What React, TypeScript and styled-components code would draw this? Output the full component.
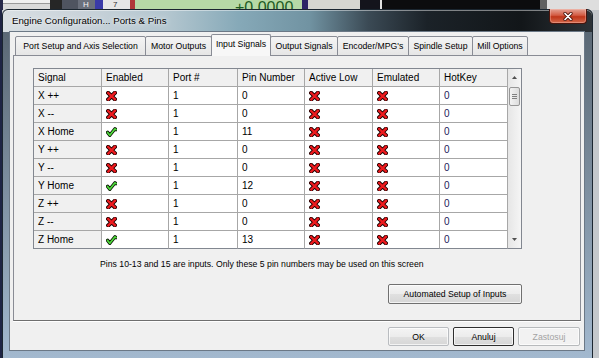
import React from 'react';
import styled, { createGlobalStyle } from 'styled-components';

const GlobalStyle = createGlobalStyle`
  html, body {
    margin: 0;
    padding: 0;
    overflow: hidden;
    background: #1e2444;
  }
  * {
    box-sizing: border-box;
  }
`;

const Desktop = styled.div`
  width: 599px;
  height: 358px;
  overflow: hidden;
  background: linear-gradient(to right, #1e2444 0, #1e2444 2px, #c4c8cc 2px);
  font-family: 'Liberation Sans', Arial, sans-serif;
  color: #000;
`;

const BackStrip = styled.div`
  display: flex;
  height: 10px;
  overflow: hidden;
`;

const StripBlock = styled.div<{ $w: number; $bg: string; $fg?: string; $pad?: number; $size?: number }>`
  flex: none;
  width: ${(p) => p.$w}px;
  height: 10px;
  overflow: hidden;
  background: ${(p) => p.$bg};
  color: ${(p) => p.$fg || '#000'};
  padding-left: ${(p) => p.$pad || 0}px;
  font-size: ${(p) => p.$size || 8}px;
  line-height: ${(p) => (p.$size && p.$size > 10 ? 16 : 10)}px;
  white-space: nowrap;
`;

const Window = styled.div`
  position: relative;
  z-index: 1;
  width: 591px;
  margin: -1px 0 0 2px;
  border: 1px solid #1b2630;
  border-radius: 6px 6px 0 0;
  padding: 0 7px 8px 6px;
  background:
    linear-gradient(
        to right,
        #d9dfe3 0%,
        #c8d2d9 14%,
        #b3c6cf 28%,
        #86a9b8 40%,
        #7193a2 52%,
        #3b4a55 62%,
        #1b2228 72%,
        #121619 88%,
        #2c3237 100%
      )
      top left / 100% 22px no-repeat,
    linear-gradient(to bottom, #56636f, #a3b9cf);
  box-shadow: inset 0 1px 0 rgba(255, 255, 255, 0.45);
`;

const TitleBar = styled.div`
  display: flex;
  align-items: flex-start;
  height: 21px;
`;

const Title = styled.span`
  margin-left: 3px;
  font-size: 9.7px;
  line-height: 21px;
  color: #000;
  text-shadow: 0 0 6px rgba(255, 255, 255, 0.9), 0 0 2px rgba(255, 255, 255, 0.8);
`;

const CloseButton = styled.div`
  margin: -1px -2px 0 auto;
  width: 38px;
  height: 15px;
  display: flex;
  align-items: center;
  justify-content: center;
  border: 1px solid #4a140c;
  border-top: none;
  border-radius: 0 0 4px 4px;
  background: linear-gradient(#e3a395 0%, #d35b43 45%, #bf3519 55%, #d4694c 100%);
  box-shadow: inset 0 0 0 1px rgba(255, 210, 200, 0.35);
`;

const Client = styled.div`
  height: 320px;
  border: 1px solid #6b7886;
  background: #f0f0f0;
  display: flex;
  flex-direction: column;
`;

const TabStrip = styled.div`
  position: relative;
  z-index: 1;
  display: flex;
  align-items: flex-end;
  height: 21px;
  margin: 3px 0 -1px;
  padding-left: 5px;
`;

const Tab = styled.div<{ $active?: boolean; $w: number }>`
  position: relative;
  flex: none;
  width: ${(p) => p.$w}px;
  height: ${(p) => (p.$active ? 22 : 20)}px;
  margin-right: -1px;
  z-index: ${(p) => (p.$active ? 2 : 1)};
  border: 1px solid #898c95;
  border-bottom: ${(p) => (p.$active ? 'none' : '1px solid #898c95')};
  border-radius: 2px 2px 0 0;
  background: ${(p) => (p.$active ? '#f7f7f7' : 'linear-gradient(#f4f4f4, #e6e6e6)')};
  font-size: 8.7px;
  line-height: ${(p) => (p.$active ? 18 : 19)}px;
  text-align: center;
  white-space: nowrap;
`;

const Panel = styled.div`
  height: 266px;
  margin: 0 3px;
  padding: 12px 0 0 19px;
  border: 1px solid #898c95;
  border-bottom-color: #6f6f6f;
  background: #f0f0f0;
  box-shadow: 0 1px 0 #ffffff;
`;

const Grid = styled.div`
  display: flex;
  width: 489px;
  height: 181px;
  border: 1px solid #828790;
  border-bottom: none;
  background: #fff;
`;

const Table = styled.div`
  display: grid;
  grid-template-columns: 68px 67px 69px 67px 68px 67px 68px;
  grid-auto-rows: 18px;
  width: 474px;

  & > :nth-last-child(-n + 7) {
    border-bottom: 1px solid #828790;
  }
`;

const Cell = styled.div<{ $kind: 'head' | 'side' | 'data'; $num?: boolean }>`
  display: flex;
  align-items: center;
  padding-left: 4px;
  border-right: 1px solid #a7a7a7;
  border-bottom: 1px solid #a7a7a7;
  background: ${(p) => (p.$kind === 'data' ? '#ffffff' : '#f0f0f0')};
  color: ${(p) => (p.$num ? '#22205a' : '#000')};
  font-size: 10px;
  white-space: nowrap;
`;

const ScrollBar = styled.div`
  width: 13px;
  display: flex;
  flex-direction: column;
  border-bottom: 1px solid #828790;
  background: linear-gradient(to right, #e6e6e6, #f5f5f5);
`;

const ArrowBox = styled.div`
  height: 17px;
  display: flex;
  align-items: center;
  justify-content: center;
`;

const Track = styled.div`
  flex: 1;
  padding: 1px 1px 0;
`;

const Thumb = styled.div`
  height: 19px;
  display: flex;
  align-items: center;
  justify-content: center;
  border: 1px solid #979797;
  border-radius: 2px;
  background: linear-gradient(to right, #f3f3f3, #dcdcdc);
`;

const Grip = styled.div`
  width: 5px;
  height: 5px;
  background: linear-gradient(#808080 1px, transparent 1px) 0 0 / 5px 2px;
`;

const Note = styled.div`
  margin: 10px 0 0 67px;
  font-size: 8.7px;
  line-height: 11px;
  white-space: nowrap;
`;

const ButtonRow = styled.div`
  display: flex;
  justify-content: flex-end;
  width: 489px;
  margin-top: 14px;
`;

const Footer = styled.div`
  display: flex;
  justify-content: flex-end;
  gap: 4px;
  margin-top: 6px;
  padding-right: 4px;
`;

const Button = styled.div<{ $w: number; $h: number; $variant?: 'default' | 'focus' | 'disabled' }>`
  width: ${(p) => p.$w}px;
  height: ${(p) => p.$h}px;
  display: flex;
  align-items: center;
  justify-content: center;
  border: 1px solid
    ${(p) =>
      p.$variant === 'focus'
        ? '#2e2e2e'
        : p.$variant === 'default'
        ? '#b9bcc0'
        : p.$variant === 'disabled'
        ? '#b7babc'
        : '#707070'};
  border-radius: 2px;
  background: ${(p) =>
    p.$variant === 'disabled'
      ? '#f2f2f2'
      : 'linear-gradient(#f4f4f4 0%, #ececec 50%, #e0e0e0 51%, #d6d6d6 100%)'};
  box-shadow: inset 0 0 0 1px rgba(255, 255, 255, 0.7);
  color: ${(p) => (p.$variant === 'disabled' ? '#a3a3a3' : '#000')};
  font-size: 8.7px;
`;

const CrossIcon = () => (
  <svg width="11" height="10" viewBox="0 0 11 10">
    <path d="M2.2 2 L8.8 8.2 M8.9 1.8 L2.3 8.4" stroke="#1a0000" strokeWidth="4.2" strokeLinecap="square" />
    <path d="M2.2 2 L8.8 8.2 M8.9 1.8 L2.3 8.4" stroke="#ec1a1e" strokeWidth="2.4" strokeLinecap="square" />
  </svg>
);

const CheckIcon = () => (
  <svg width="11" height="10" viewBox="0 0 11 10">
    <path
      d="M1.6 5.4 L3.8 8.3 L9 1.8 L10 2.6"
      fill="none"
      stroke="#0c1a06"
      strokeWidth="3.4"
      strokeLinecap="round"
      strokeLinejoin="round"
    />
    <path
      d="M1.6 5.4 L3.8 8.3 L9 1.8 L10 2.6"
      fill="none"
      stroke="#4fdc3c"
      strokeWidth="1.7"
      strokeLinecap="round"
      strokeLinejoin="round"
    />
  </svg>
);

const CloseGlyph = () => (
  <svg width="12" height="9" viewBox="0 0 12 9">
    <path d="M3 1.5 L9 7.5 M9 1.5 L3 7.5" stroke="#4a1208" strokeWidth="3.2" strokeLinecap="round" />
    <path d="M3 1.5 L9 7.5 M9 1.5 L3 7.5" stroke="#ffffff" strokeWidth="1.7" strokeLinecap="round" />
  </svg>
);

const Arrow = ({ up }: { up?: boolean }) => (
  <svg width="5" height="3" viewBox="0 0 5 3">
    <path d={up ? 'M0 3 L2.5 0 L5 3 Z' : 'M0 0 L2.5 3 L5 0 Z'} fill="#505050" />
  </svg>
);

const strip = [
  { w: 3, bg: '#27294a' },
  { w: 47, bg: 'linear-gradient(#f0f0f0 0 3px, #9a9a9a 3px 4px, #dadada 4px)' },
  { w: 12, bg: '#262626' },
  { w: 16, bg: '#4f5460' },
  { w: 17, bg: '#6b707c', fg: '#f4f4f4', pad: 5, text: 'H' },
  { w: 8, bg: '#3a3aa8' },
  { w: 27, bg: '#e6e6e6', fg: '#303030', pad: 10, text: '7' },
  { w: 5, bg: '#b03838' },
  { w: 167, bg: '#b6d9a6', fg: '#1d5c23', pad: 100, size: 16, text: '+0.0000' },
  { w: 6, bg: '#2c2466' },
  { w: 52, bg: '#d6d6d0' },
  { w: 20, bg: '#14141c' },
  { w: 2, bg: '#e0e0e0' },
  { w: 158, bg: '#0c0c0e' },
  { w: 7, bg: '#606060' },
  { w: 52, bg: '#dedede' },
];

const tabs = [
  { label: 'Port Setup and Axis Selection', w: 131 },
  { label: 'Motor Outputs', w: 67 },
  { label: 'Input Signals', w: 60, active: true },
  { label: 'Output Signals', w: 68 },
  { label: "Encoder/MPG's", w: 72 },
  { label: 'Spindle Setup', w: 65 },
  { label: 'Mill Options', w: 56 },
];

const columns = ['Signal', 'Enabled', 'Port #', 'Pin Number', 'Active Low', 'Emulated', 'HotKey'];

const signals = [
  { name: 'X ++', on: false, pin: '0' },
  { name: 'X --', on: false, pin: '0' },
  { name: 'X Home', on: true, pin: '11' },
  { name: 'Y ++', on: false, pin: '0' },
  { name: 'Y --', on: false, pin: '0' },
  { name: 'Y Home', on: true, pin: '12' },
  { name: 'Z ++', on: false, pin: '0' },
  { name: 'Z --', on: false, pin: '0' },
  { name: 'Z Home', on: true, pin: '13' },
];

export default function App() {
  return (
    <Desktop>
      <GlobalStyle />
      <BackStrip>
        {strip.map((b, i) => (
          <StripBlock key={i} $w={b.w} $bg={b.bg} $fg={b.fg} $pad={b.pad} $size={b.size}>
            {b.text}
          </StripBlock>
        ))}
      </BackStrip>
      <Window>
        <TitleBar>
          <Title>Engine Configuration... Ports &amp; Pins</Title>
          <CloseButton>
            <CloseGlyph />
          </CloseButton>
        </TitleBar>
        <Client>
          <TabStrip>
            {tabs.map((t) => (
              <Tab key={t.label} $w={t.w} $active={t.active}>
                {t.label}
              </Tab>
            ))}
          </TabStrip>
          <Panel>
            <Grid>
              <Table>
                {columns.map((c) => (
                  <Cell key={c} $kind="head">
                    {c}
                  </Cell>
                ))}
                {signals.map((s) => (
                  <React.Fragment key={s.name}>
                    <Cell $kind="side">{s.name}</Cell>
                    <Cell $kind="data">{s.on ? <CheckIcon /> : <CrossIcon />}</Cell>
                    <Cell $kind="data">1</Cell>
                    <Cell $kind="data">{s.pin}</Cell>
                    <Cell $kind="data">
                      <CrossIcon />
                    </Cell>
                    <Cell $kind="data">
                      <CrossIcon />
                    </Cell>
                    <Cell $kind="data" $num>
                      0
                    </Cell>
                  </React.Fragment>
                ))}
              </Table>
              <ScrollBar>
                <ArrowBox>
                  <Arrow up />
                </ArrowBox>
                <Track>
                  <Thumb>
                    <Grip />
                  </Thumb>
                </Track>
                <ArrowBox>
                  <Arrow />
                </ArrowBox>
              </ScrollBar>
            </Grid>
            <Note>Pins 10-13 and 15 are inputs. Only these 5 pin numbers may be used on this screen</Note>
            <ButtonRow>
              <Button $w={134} $h={20}>
                Automated Setup of Inputs
              </Button>
            </ButtonRow>
          </Panel>
          <Footer>
            <Button $w={61} $h={19} $variant="default">
              OK
            </Button>
            <Button $w={61} $h={19} $variant="focus">
              Anuluj
            </Button>
            <Button $w={62} $h={19} $variant="disabled">
              Zastosuj
            </Button>
          </Footer>
        </Client>
      </Window>
    </Desktop>
  );
}
